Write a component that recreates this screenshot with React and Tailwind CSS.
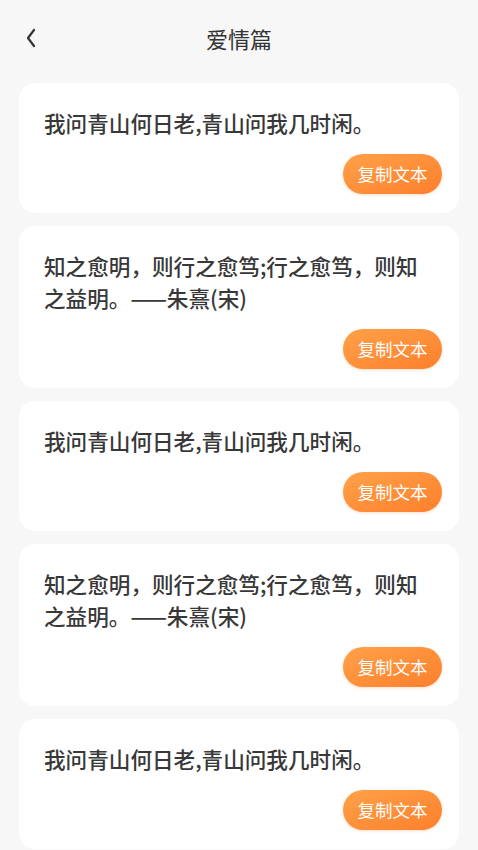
import React from "react";

const items = [
  "我问青山何日老,青山问我几时闲。",
  "知之愈明，则行之愈笃;行之愈笃，则知之益明。——朱熹(宋)",
  "我问青山何日老,青山问我几时闲。",
  "知之愈明，则行之愈笃;行之愈笃，则知之益明。——朱熹(宋)",
  "我问青山何日老,青山问我几时闲。",
];

export default function App() {
  return (
    <div
      className="min-h-[850px] bg-[#f7f7f7] text-[#333333]"
      style={{ fontFamily: '"Noto Sans CJK SC", "Noto Sans", sans-serif' }}
    >
      <div className="relative flex h-[77px] items-center justify-center">
        <button className="absolute left-[22px] top-[26px] flex h-[24px] w-[18px] items-center justify-center">
          <svg width="14" height="22" viewBox="0 0 14 22" fill="none">
            <path d="M10 3 L4 11 L10 19" stroke="#333" strokeWidth="2.2" strokeLinecap="round" strokeLinejoin="round" />
          </svg>
        </button>
        <div className="mt-[-1px] text-[22px] leading-[28px] text-[#333]">爱情篇</div>
      </div>
      <div className="mt-[6px] flex flex-col gap-[13px] px-[19px]">
        {items.map((t, i) => (
          <div key={i} className="rounded-[16px] bg-white pb-[19px] pl-[25px] pr-[17px] pt-[24px]">
            <div className="w-[386px] text-[21.6px] font-medium leading-[32px] text-[#383838]">{t}</div>
            <div className="mt-[15px] flex justify-end">
              <button className="flex h-[40px] w-[99px] items-center justify-center rounded-full bg-gradient-to-br from-[#ffa148] to-[#fd7f2c] text-[17.5px] text-white shadow-[0_1px_3px_rgba(253,127,44,0.25)]">
                复制文本
              </button>
            </div>
          </div>
        ))}
      </div>
    </div>
  );
}
